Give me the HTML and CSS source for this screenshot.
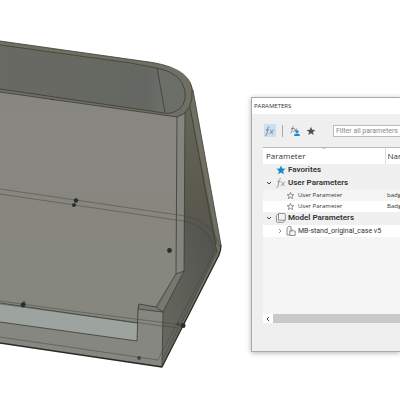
FILE: index.html
```
<!DOCTYPE html>
<html lang="en">
<head>
<meta charset="utf-8">
<meta name="viewport" content="width=device-width, initial-scale=1">
<title>Parameters</title>
<link rel="stylesheet" href="styles.css">
</head>
<body>
<main class="workspace">
  <svg class="model" viewBox="0 0 251 400" preserveAspectRatio="xMinYMin meet" role="img" aria-label="Stand model">
    <defs>
      <linearGradient id="back" x1="0" y1="0" x2="0" y2="1"><stop offset="0" stop-color="#888681"/><stop offset=".5" stop-color="#878780"/><stop offset="1" stop-color="#85877e"/></linearGradient>
      <linearGradient id="inside" x1="0" y1="0" x2="1" y2="0"><stop offset="0" stop-color="#686962"/><stop offset=".8" stop-color="#656862"/><stop offset="1" stop-color="#777972"/></linearGradient>
      <linearGradient id="side" x1="0" y1="0" x2="0" y2="1"><stop offset="0" stop-color="#66655a"/><stop offset=".5" stop-color="#5c5b50"/><stop offset="1" stop-color="#52534d"/></linearGradient>
      <linearGradient id="lower" x1="1" y1="0" x2="0" y2="1"><stop offset="0" stop-color="#50524b"/><stop offset="1" stop-color="#696961"/></linearGradient>
    </defs>
    <path fill="#706f63" d="M0 41 142 61Q188 66 193 90L221 245Q221 250 219 255L162 367 0 343Z"/>
    <path fill="url(#inside)" d="M0 46 130 64 157 68Q182 73 185 91 187 108 174 112L164 113 0 89Z"/>
    <path fill="#6c6f68" d="M157 69Q182 74 185 91 187 108 174 112L165 113Z"/>
    <path fill="#706f66" d="M0 89 164 113Q181 114 185 91L192 90Q191 111 177 117L0 92Z"/>
    <path fill="url(#back)" d="M0 92 177 117 176 274 156 308 138 304 137 341 0 323Z"/>
    <path fill="#84857e" d="M177 117Q183 116 185 112L184 271 176 274Z"/>
    <path fill="url(#side)" d="M185 113 190 105 217 243 212 254 184 271Z"/>
    <path fill="url(#lower)" d="M184 217Q207 221 217 251L163 365 163 312 184 271Z"/>
    <path fill="#777970" d="M176 274 184 271 163 312 138 309 139 304 159 307Z"/>
    <path fill="#858780" d="M138 309 163 312 162 366 0 343 0 322 137 341Z"/>
    <path fill="#9da39f" d="M0 303 137 323 137 341 0 322Z"/>
    <g class="edge">
      <path d="M0 41 142 61Q188 66 192 88 194 112 177 117L0 92M0 45 130 63 157 68Q182 73 185 91 187 107 174 112 170 114 164 113L0 89M157 68 165 112M177 117 176 274 156 307 139 304 138 309 163 312 184 271 185 112M176 274 184 271M190 107 217 253M193 90 221 245M138 309 137 341 0 322M0 303 137 323M163 312 162 367M50 99 54 100M156 307 163 312"/>
    </g>
    <g class="hidden-edge">
      <path d="M0 189 178 215Q211 218 220 247M0 194 176 220Q211 223 214 253L158 360 0 337M0 301 80 312 183 325M0 304 80 315 178 328M217 253 162 360"/>
    </g>
    <path class="rim" d="M221 245Q221 250 219 255L162 367 0 343"/>
    <g fill="#293029"><circle cx="76" cy="200.500" r="2.200"/><circle cx="74" cy="205" r="2"/><circle cx="169.500" cy="250.500" r="2.400"/><circle cx="23" cy="305" r="2.400"/><circle cx="183" cy="325.500" r="2.500"/><circle cx="139" cy="358" r="2" opacity=".7"/><circle cx="24" cy="303" r="2" opacity=".5"/><circle cx="178" cy="324" r="1.500" opacity=".6"/></g>
  </svg>

  <section class="dialog" aria-labelledby="dialog-title">
    <h1 class="dialog-title" id="dialog-title">PARAMETERS</h1>
    <div class="toolbar">
      <button class="tool tool-active" type="button" aria-label="User parameters">
        <svg class="icon" viewBox="0 0 12 12"><path class="line" d="M5.500 2.200C4.500 1.500 3.900 2.200 3.700 3.500L2.800 9C2.600 10.200 2 10.600 1 10.100M2 4.800H5M6 4.800C7.500 4.500 7.400 8.700 9 8.500M10 4.800C8.500 4.800 7.500 8.700 5.500 8.500"/></svg>
      </button>
      <span class="divider"></span>
      <button class="tool" type="button" aria-label="My parameters">
        <svg class="icon" viewBox="0 0 12 12"><path class="line" d="M5 1.800C4 1.300 3.700 2 3.500 3L2.800 6.500C2.600 7.800 2 8 1.500 7.700M2 3.500H5M5 3.500C6.500 3.500 6 7 7.500 6.500M8.300 3.500C7 3.700 6 6.700 4.500 6.500"/><circle cx="8" cy="6.500" r="1.600" fill="#198bcf"/><path fill="#198bcf" d="M5.200 11V9.500Q8 7.500 10.800 9.500V11Z"/></svg>
      </button>
      <button class="tool" type="button" aria-label="Favorites only">
        <svg class="icon" viewBox="0 0 12 12"><path fill="#505050" d="M6 1.700 7.200 4.700 10.400 4.900 7.900 6.900 8.700 10 6 8.300 3.300 10 4.100 6.900 1.600 4.900 4.800 4.700Z"/></svg>
      </button>
      <input class="filter" type="text" aria-label="Filter all parameters" placeholder="Filter all parameters">
    </div>
    <div class="grid-area">
      <svg class="sort" viewBox="0 0 6 3"><path d="M1 .5Q3 3 5 .5" fill="none" stroke="#aaa" stroke-width=".7"/></svg>
      <table class="params">
        <thead><tr><th class="col-param">Parameter</th><th class="col-name">Name</th></tr></thead>
        <tbody>
          <tr class="group"><td><div class="cell"><span class="arrow"></span>
            <svg class="icon" viewBox="0 0 12 12"><path fill="#168ac7" d="M6 1.500 7.300 4.600 10.600 4.800 8 6.900 8.900 10.200 6 8.400 3.100 10.200 4 6.900 1.400 4.800 4.700 4.600Z"/></svg>Favorites</div></td><td></td></tr>
          <tr class="group"><td><div class="cell"><svg class="arrow" viewBox="0 0 8 8"><path class="chevron" d="M2 3 4 5 6 3"/></svg>
            <svg class="icon" viewBox="0 0 12 12"><path class="line faint" d="M6 1.900C4.900 1.200 4.200 1.800 4 3.500L3.100 9C2.900 10.300 2.200 10.600 1.200 10.100M2.200 4.700H5.500M6.200 4.800C8 4.500 7.600 9 9.500 8.700M10.200 4.800C8.700 4.800 7.700 8.900 5.800 8.700"/></svg>User Parameters</div></td><td></td></tr>
          <tr class="item"><td><div class="cell leaf">
            <svg class="icon-small" viewBox="0 0 9 9"><path class="line" d="M4.500 1.300 5.400 3.500 7.800 3.700 6 5.200 6.600 7.600 4.500 6.300 2.400 7.600 3 5.200 1.200 3.700 3.600 3.500Z"/></svg>User Parameter</div></td><td>badge</td></tr>
          <tr class="item item-white"><td><div class="cell leaf">
            <svg class="icon-small" viewBox="0 0 9 9"><path class="line" d="M4.500 1.300 5.400 3.500 7.800 3.700 6 5.200 6.600 7.600 4.500 6.300 2.400 7.600 3 5.200 1.200 3.700 3.600 3.500Z"/></svg>User Parameter</div></td><td>Badge</td></tr>
          <tr class="group"><td><div class="cell"><svg class="arrow" viewBox="0 0 8 8"><path class="chevron" d="M2 3 4 5 6 3"/></svg>
            <svg class="icon" viewBox="0 0 12 12"><path class="line solid" d="M1.500 3.500 3.500 1.500H9.300Q10.300 1.500 10.300 2.500V8L8.300 10.300H2.500Q1.500 10.300 1.500 9.300Z"/><path class="line" d="M3.500 1.600V8.200H10.200"/></svg>Model Parameters</div></td><td></td></tr>
          <tr class="component item-white"><td><div class="cell branch"><svg class="arrow" viewBox="0 0 8 8"><path class="chevron thin" d="M3 2 5 4 3 6"/></svg>
            <svg class="icon" viewBox="0 0 12 12"><path class="line solid" d="M2 3 3.500 1.500H6V10H2Z"/><path class="line solid" d="M4.800 6H7V4.500L8.500 6H10.200V10.500H4.800Z"/></svg>MB-stand_original_case v5</div></td><td></td></tr>
        </tbody>
      </table>
      <div class="scrollbar">
        <button class="scroll-left" type="button" aria-label="Scroll left"><svg class="arrow" viewBox="0 0 8 8"><path class="chevron" d="M5 2 3 4 5 6"/></svg></button>
        <span class="thumb"></span>
      </div>
    </div>
  </section>
</main>
</body>
</html>
```

FILE: styles.css
```
* { box-sizing: border-box; }
body {
  margin: 0;
  background: #fff;
  color: #333;
  font-family: "Open Sans", "Noto Sans", sans-serif;
  overflow-x: hidden;
}
svg { display: block; flex: none; }
button { border: 0; padding: 0; background: none; display: flex; align-items: center; justify-content: center; }

.workspace { display: flex; align-items: flex-start; min-height: 100vh; overflow: hidden; }
.model { width: 62.75%; }
.edge, .hidden-edge, .rim { fill: none; stroke-linejoin: round; }
.edge { stroke: #3c3c32; stroke-width: .8; }
.hidden-edge { stroke: #41443b; stroke-width: .6; opacity: .8; }
.rim { stroke: #292b26; stroke-width: 1.300; }

.dialog {
  flex: 1;
  min-width: 0;
  margin-top: 97px;
  padding-bottom: 28px;
  background: #efefef;
  border: 1px solid #aaa;
  border-right: 0;
  box-shadow: 0 1px 5px rgba(0, 0, 0, .3);
}
.dialog-title {
  margin: 0;
  padding: 0 2px;
  background: #fff;
  font-size: 6px;
  font-weight: 400;
  line-height: 16px;
}
.toolbar { display: flex; align-items: center; height: 33px; padding-left: 12px; }
.tool { width: 12px; height: 13px; }
.tool + .tool { margin-left: 4px; }
.tool-active { background: #c9dff2; }
.divider { width: 1px; height: 12px; margin: 0 6px; background: #aaa; }
.filter {
  flex: 1;
  min-width: 0;
  height: 12px;
  margin-left: 16px;
  padding: 0 0 0 2px;
  border: 1px solid #bbb;
  border-right: 0;
  background: #fff;
  font: 7px Roboto, sans-serif;
}
.filter::placeholder { color: #888; opacity: 1; }
.icon { width: 12px; height: 12px; }
.icon-small { width: 9px; height: 9px; }
.arrow { width: 8px; height: 8px; flex: none; }
.line { fill: none; stroke: #777; stroke-width: .8; }
.solid { fill: #f4f4f4; }
.faint { stroke: #888; }
.chevron { fill: none; stroke: #444; stroke-width: 1; }
.thin { stroke: #777; stroke-width: .8; }

.grid-area { position: relative; display: flex; flex-direction: column; min-height: 176px; margin-left: 11px; background: #f5f5f5; }
.sort { position: absolute; top: 0; left: 58px; width: 6px; height: 3px; }
.params { width: 100%; table-layout: fixed; border-collapse: collapse; white-space: nowrap; }
.params th {
  height: 16px;
  padding: 0 3px;
  background: #fff;
  border-top: 1px solid #bbb;
  text-align: left;
  font-size: 8px;
  font-weight: 400;
  line-height: 12px;
}
.params .col-param { width: 122px; }
.params .col-name { padding: 0 2px; border-left: 1px solid #ddd; }
.params td { padding: 0; line-height: 10px; }
.params td + td { padding-left: 2px; }
.cell { display: flex; align-items: center; gap: 1px; padding-left: 2px; }
.group { height: 13px; background: #f0f0f0; font: 600 8px Roboto, sans-serif; color: #333; }
.group .icon { margin-left: 1px; }
.item { height: 11px; background: #f5f5f5; font-size: 6px; }
.item-white { background: #fff; }
.leaf { gap: 3px; padding-left: 23px; }
.component { height: 12px; font: 7px Roboto, sans-serif; }
.branch { padding-left: 13px; }

.scrollbar { display: flex; height: 9px; margin-top: auto; }
.scroll-left { width: 10px; background: #fff; }
.thumb { flex: 1; background: #c9c9c9; }
```
